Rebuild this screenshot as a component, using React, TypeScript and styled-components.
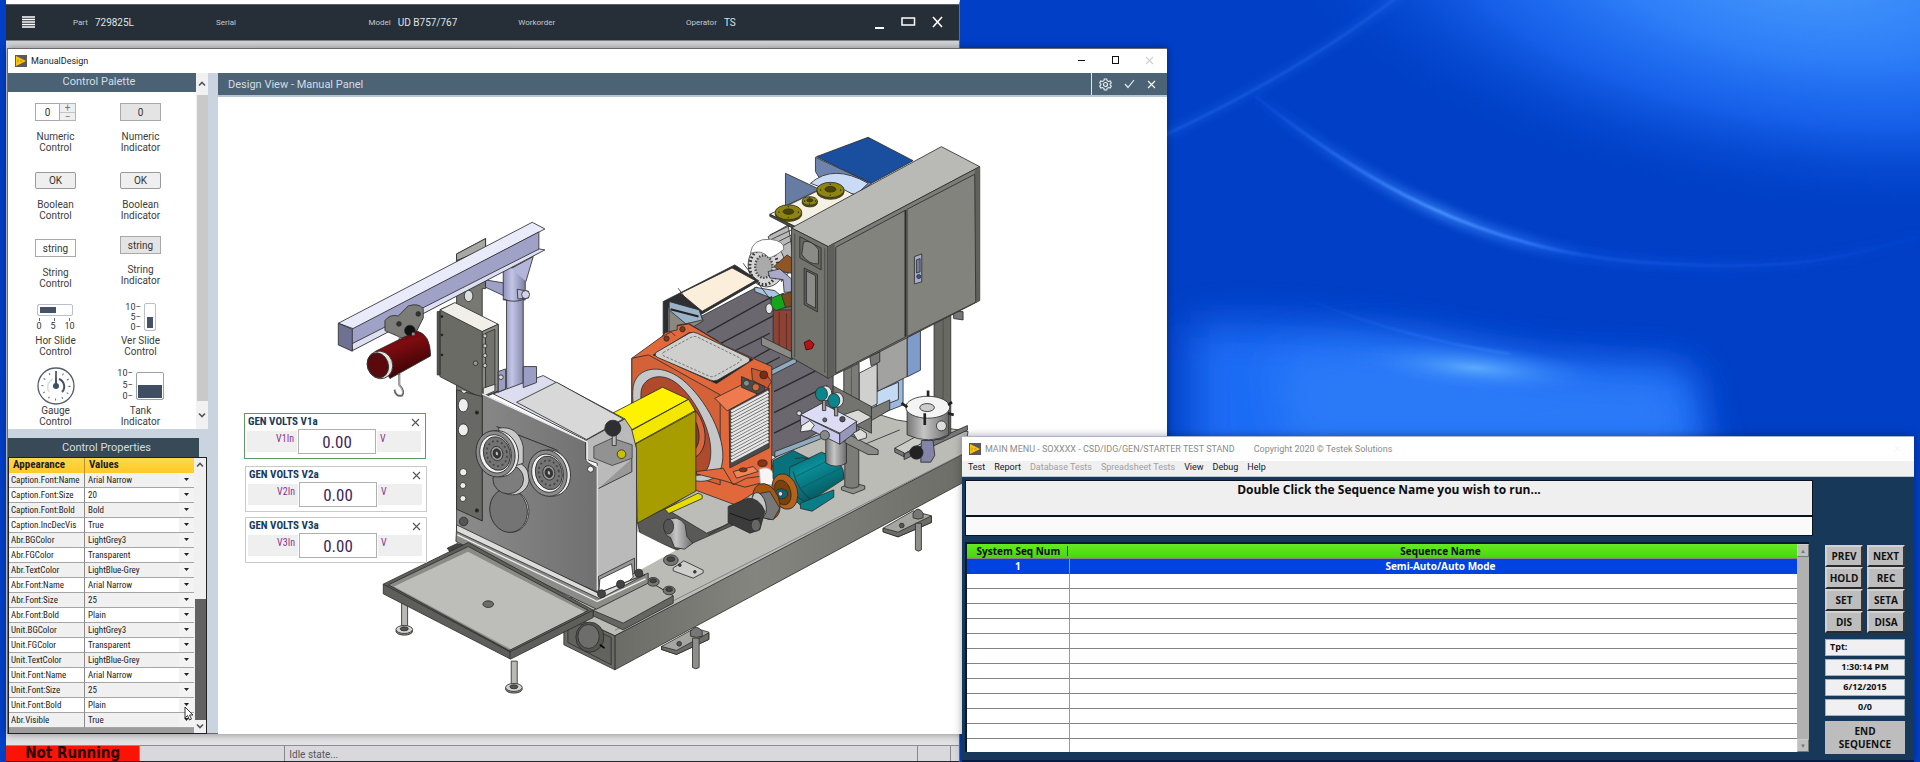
import React from 'react';
import styled, { createGlobalStyle, css } from 'styled-components';

const ui = `Roboto, "Liberation Sans", sans-serif`;
const narrow = `"Roboto Condensed", Roboto, "Liberation Sans", sans-serif`;
const segoe = `"Open Sans", "Noto Sans", sans-serif`;

const GlobalStyle = createGlobalStyle`
  * { box-sizing: border-box; }
  body { margin: 0; font-family: ${ui}; font-size: 10px; color: #333; }
  button, input, select { font: inherit; color: inherit; margin: 0; padding: 0; border-radius: 0; }
  h1, h2, p { margin: 0; font-weight: normal; }
`;

/* ---------- desktop ---------- */

const Desktop = styled.div`
  position: relative;
  min-height: 100vh;
  overflow: hidden;
  background: #003fc6;
`;

const WallpaperSvg = styled.svg`
  position: absolute;
  inset: 0;
  width: 100%;
  height: 100%;
`;

function Wallpaper() {
  return (
    <WallpaperSvg viewBox="0 0 1920 762" preserveAspectRatio="xMidYMid slice" aria-hidden="true">
      <defs>
        <radialGradient id="skyGlow">
          <stop offset="0" stopColor="#4799fb" />
          <stop offset="0.35" stopColor="#2e7ff8" />
          <stop offset="0.62" stopColor="#1c68f2" stopOpacity="0.8" />
          <stop offset="1" stopColor="#0044cc" stopOpacity="0" />
        </radialGradient>
        <radialGradient id="seaGlow">
          <stop offset="0" stopColor="#5caafd" />
          <stop offset="1" stopColor="#2a78f8" stopOpacity="0" />
        </radialGradient>
        <linearGradient id="arcLight" gradientUnits="userSpaceOnUse" x1="1255" x2="1920" y1="0" y2="0">
          <stop offset="0" stopColor="#2a70ff" stopOpacity="0.1" />
          <stop offset="0.28" stopColor="#4a94ff" />
          <stop offset="0.4" stopColor="#3a80ff" stopOpacity="0.8" />
          <stop offset="0.5" stopColor="#2a70ff" stopOpacity="0.3" />
          <stop offset="1" stopColor="#2a70ff" stopOpacity="0.05" />
        </linearGradient>
        <linearGradient id="lowArc" gradientUnits="userSpaceOnUse" x1="1290" x2="1520" y1="0" y2="0">
          <stop offset="0" stopColor="#2a70ff" stopOpacity="0" />
          <stop offset="1" stopColor="#3f86fb" stopOpacity="0.7" />
        </linearGradient>
        <filter id="soft" x="-30%" y="-60%" width="160%" height="220%"><feGaussianBlur stdDeviation="20" /></filter>
        <filter id="fine" x="-10%" y="-10%" width="120%" height="120%"><feGaussianBlur stdDeviation="0.8" /></filter>
        <filter id="halo" x="-10%" y="-10%" width="120%" height="120%"><feGaussianBlur stdDeviation="5" /></filter>
      </defs>
      <rect width="1920" height="762" fill="#003fc6" />
      <ellipse cx="1800" cy="-30" rx="560" ry="240" fill="url(#skyGlow)" transform="rotate(8 1800 -30)" />
      <path d="M1190 325 Q1330 318 1480 352 Q1600 366 1690 368 L1712 480 L1190 480 Z" fill="#1e6cf5" filter="url(#soft)" />
      <path d="M1270 360 Q1400 325 1540 372 L1685 378 L1690 450 L1290 450 Z" fill="#2f7ef9" opacity="0.8" filter="url(#soft)" />
      <ellipse cx="1475" cy="368" rx="130" ry="24" fill="url(#seaGlow)" transform="rotate(5 1475 368)" />
      <g fill="none">
        <path d="M1165 135 Q1300 72 1400 -5" stroke="#2a70f0" strokeWidth="8" opacity="0.3" filter="url(#halo)" />
        <path d="M1165 135 Q1300 72 1400 -5" stroke="#2a70f0" strokeWidth="2" opacity="0.45" filter="url(#fine)" />
        <path d="M1255 96 C1360 180 1480 250 1640 262 S1850 255 1920 236" stroke="url(#arcLight)" strokeWidth="12" opacity="0.6" filter="url(#halo)" />
        <path d="M1255 96 C1360 180 1480 250 1640 262 S1850 255 1920 236" stroke="url(#arcLight)" strokeWidth="3" filter="url(#fine)" />
        <path d="M1290 292 Q1390 336 1510 354" stroke="url(#lowArc)" strokeWidth="2" filter="url(#fine)" />
      </g>
    </WallpaperSvg>
  );
}

const IconButton = styled.button`
  display: inline-flex;
  align-items: center;
  justify-content: center;
  border: 0;
  background: none;
`;

/* ---------- test stand window behind the designer ---------- */

const StandWindow = styled.section`
  position: absolute;
  left: 6px;
  top: 0;
  bottom: 0;
  width: 49.7%;
  display: flex;
  flex-direction: column;
  border-top: 4px solid #fff;
  border-right: 1px solid #2f76dc;
  background: linear-gradient(#d3d5d8, #e2e2e4);
`;

const StandHeader = styled.header`
  display: grid;
  grid-template-columns: 67px 15% 16% 15.7% 17.6% 1fr;
  align-items: center;
  height: 37px;
  padding-bottom: 1px;
  background: #262f38;
  border-top: 1px solid #55606a;
  border-bottom: 1px solid #7b8288;
  color: #dfe3e6;
`;

const MenuButton = styled(IconButton)`
  width: 13px;
  margin-left: 16px;
`;

const Field = styled.div`
  display: flex;
  align-items: center;
  gap: 7px;
  font-size: 10px;
  white-space: nowrap;
`;

const FieldLabel = styled.span`
  font-size: 8px;
  color: #c3c9ce;
`;

const StandControls = styled.div`
  display: flex;
  justify-content: flex-end;
  align-items: center;
  gap: 16px;
  padding-right: 15px;
`;

const LastCell = styled.div`
  display: flex;
  align-items: center;
  justify-content: space-between;
`;

const StatusBar = styled.footer`
  display: flex;
  height: 17px;
  margin-top: auto;
  border-top: 1px solid #8d8f93;
  border-bottom: 1px solid #23262b;
  background: #d9d9dd;
`;

const RunState = styled.div`
  width: 14%;
  background: #fb1405;
  color: #2a0502;
  font: bold 15px/15px "DejaVu Sans Condensed", "DejaVu Sans", sans-serif;
  text-align: center;
  white-space: nowrap;
`;

const StatusCell = styled.div<{ $width?: string }>`
  ${(p) => (p.$width ? css`width: ${p.$width};` : css`flex: 1;`)}
  padding: 3px 4px 0;
  border-left: 1px solid #85878b;
  color: #55585c;
  line-height: 12px;
`;

const fields: [string, string][] = [
  ['Part', '729825L'],
  ['Serial', ''],
  ['Model', 'UD B757/767'],
  ['Workorder', ''],
];

function TestStand() {
  return (
    <StandWindow>
      <StandHeader>
        <MenuButton aria-label="Menu">
          <svg width="13" height="12" viewBox="0 0 13 12" stroke="#fff" strokeWidth="1.4">
            <path d="M0 1h13M0 3.5h13M0 6h13M0 8.500h13M0 11h13" />
          </svg>
        </MenuButton>
        {fields.map(([label, value]) => (
          <Field key={label}><FieldLabel>{label}</FieldLabel>{value}</Field>
        ))}
        <LastCell>
          <Field><FieldLabel>Operator</FieldLabel>TS</Field>
          <StandControls>
            <IconButton aria-label="Minimize">
              <svg width="10" height="14" viewBox="0 0 10 14"><path d="M0 13h9" stroke="#fff" strokeWidth="2" /></svg>
            </IconButton>
            <IconButton aria-label="Maximize">
              <svg width="15" height="12" viewBox="0 0 15 12"><rect x="1" y="2" width="12.500" height="7" fill="none" stroke="#fff" strokeWidth="1.5" /></svg>
            </IconButton>
            <IconButton aria-label="Close">
              <svg width="12" height="12" viewBox="0 0 12 12"><path d="M1 1l9 10M10 1L1 11" stroke="#fff" strokeWidth="1.6" /></svg>
            </IconButton>
          </StandControls>
        </LastCell>
      </StandHeader>
      <StatusBar>
        <RunState>Not Running</RunState>
        <StatusCell $width="15.2%" />
        <StatusCell>Idle state...</StatusCell>
        <StatusCell $width="33px" />
        <StatusCell $width="6px" />
      </StatusBar>
    </StandWindow>
  );
}

/* ---------- shared window parts ---------- */

const TitleBar = styled.header<{ $muted?: boolean }>`
  display: flex;
  align-items: center;
  flex: none;
  height: 24px;
  padding: 0 7px 1px;
  background: #fff;
  color: ${(p) => (p.$muted ? '#8b8b8b' : '#222')};
  font-size: 9px;
  white-space: pre;
`;

const Title = styled.h1`
  margin-left: 4px;
  font-size: 9px;
`;

const Logo = () => (
  <svg width="12" height="12" viewBox="0 0 12 12" aria-hidden="true">
    <rect width="12" height="12" fill="#5b5a58" />
    <path d="M1 1l10 5-10 5z" fill="#ffc60a" />
    <path d="M3 4.500v3M5 6h2.500" stroke="#b98a00" />
  </svg>
);

const Chevron = ({ up }: { up?: boolean }) => (
  <svg width="8" height="6" viewBox="0 0 8 6" aria-hidden="true">
    <path d={up ? 'M1 4.500l3-3 3 3' : 'M1 1.500l3 3 3-3'} fill="none" stroke="#555" strokeWidth="1.6" />
  </svg>
);

/* ---------- designer window ---------- */

const DesignWindow = styled.section`
  position: absolute;
  left: 7px;
  top: 48px;
  bottom: 28px;
  width: 60.4%;
  display: flex;
  flex-direction: column;
  border: 1px solid #6a6a6e;
  border-right: 0;
  background: #fff;
  box-shadow: 0 0 8px rgba(0, 0, 0, 0.4);
`;

const WindowControls = styled.div`
  display: flex;
  align-items: center;
  gap: 25px;
  margin-left: auto;
  padding-right: 6px;
`;

const DesignBody = styled.div`
  display: grid;
  grid-template-columns: 200px minmax(0, 1fr);
  column-gap: 10px;
  flex: 1;
  min-height: 0;
  background: #cad3e0;
`;

const Sidebar = styled.aside`
  display: flex;
  flex-direction: column;
  gap: 9px;
  min-height: 0;
`;

const PalettePane = styled.section`
  display: flex;
  flex: 1;
  min-height: 0;
  overflow: hidden;
  background: #fff;
`;

const PaneMain = styled.div`
  flex: 1;
  min-width: 0;
`;

const PaneTitle = styled.h2<{ $dark?: boolean }>`
  height: 19px;
  background: ${(p) => (p.$dark ? '#384a57' : '#4a6274')};
  color: #d5dde3;
  font-size: 11px;
  line-height: ${(p) => (p.$dark ? '19px' : '17px')};
  text-align: center;
  ${(p) => (p.$dark ? css`margin-right: 9px; padding-left: 6px;` : css`padding-right: 6px;`)}
`;

const ScrollTrack = styled.div`
  display: flex;
  flex-direction: column;
  align-items: center;
  width: 12px;
  background: #f1f1f1;
`;

const ScrollEnd = styled(IconButton)<{ $h: number }>`
  width: 100%;
  height: ${(p) => p.$h}px;
`;

const ScrollThumb = styled.div<{ $dark?: boolean }>`
  width: 11px;
  flex: 1;
  background: ${(p) => (p.$dark ? '#626262' : '#c9c9c9')};
`;

const PaletteGrid = styled.div`
  display: grid;
  grid-template-columns: 85px 85px;
  grid-template-rows: 69px 64px 67px 64px auto;
  padding: 11px 0 0 5px;
`;

const PaletteItem = styled.div<{ $lead?: number }>`
  display: flex;
  flex-direction: column;
  align-items: center;
  padding-top: ${(p) => p.$lead ?? 0}px;
`;

const Preview = styled.div<{ $h: number }>`
  display: flex;
  align-items: flex-start;
  justify-content: center;
  height: ${(p) => p.$h}px;
`;

const Caption = styled.span`
  width: 52px;
  font-size: 10px;
  line-height: 11px;
  text-align: center;
  color: #3c3c3c;
`;

const SampleInput = styled.input<{ $readonly?: boolean; $w: number }>`
  width: ${(p) => p.$w}px;
  height: 18px;
  border: 1px solid #a9a9a9;
  background: ${(p) => (p.$readonly ? '#e4e4e4' : '#fff')};
  text-align: center;
`;

const Spinner = styled.div`
  display: grid;
  width: 16px;
  height: 18px;
  border: 1px solid #b5b5b5;
  border-left: 0;
  background: #efefef;
`;

const Step = styled.button`
  height: 8px;
  border: 0;
  background: none;
  color: #777;
  font-size: 10px;
  line-height: 8px;
  & + & { border-top: 1px solid #c4c4c4; }
`;

const OkButton = styled.button`
  width: 41px;
  height: 17px;
  border: 1px solid #9a9a9a;
  border-radius: 2px;
  background: #efefef;
  font-size: 10px;
`;

const HorScale = styled.div`
  display: flex;
  flex-direction: column;
  width: 38px;
  padding-top: 1px;
`;

const Range = styled.input<{ $vertical?: boolean }>`
  appearance: none;
  border: 1px solid #b9bfcb;
  border-radius: 2px;
  background: #fff;
  ${(p) =>
    p.$vertical
      ? css`
          writing-mode: vertical-lr;
          width: 12px;
          height: 28px;
          box-shadow: inset 0 0 0 2px #fff;
          background: linear-gradient(#fff 50%, #465266 50%);
        `
      : css`
          width: 36px;
          height: 12px;
          box-shadow: inset 0 0 0 2px #fff;
          background: linear-gradient(90deg, #465266 52%, #fff 52%);
        `}
  &::-webkit-slider-thumb { appearance: none; width: 0; height: 0; }
`;

const Ticks = styled.div<{ $vertical?: boolean }>`
  display: flex;
  justify-content: space-between;
  font-size: 9px;
  line-height: 9px;
  ${(p) =>
    p.$vertical
      ? css`flex-direction: column; height: 29px; text-align: right; margin-right: 3px; white-space: nowrap;`
      : css`height: 15px; align-items: flex-end; background:
          linear-gradient(#666, #666) 2px 2px / 1px 3px no-repeat,
          linear-gradient(#666, #666) 17px 2px / 1px 3px no-repeat,
          linear-gradient(#666, #666) 32px 2px / 1px 3px no-repeat;`}
`;

const Tank = styled.div`
  width: 28px;
  height: 28px;
  margin-top: 5px;
  border: 1px solid #9aa1ae;
  border-radius: 2px;
  box-shadow: inset 0 0 0 1px #fff;
  background: linear-gradient(#fff 48%, #3f4e62 48%);
`;

const TankTicks = styled(Ticks)`
  margin-top: 2px;
  height: 32px;
`;

const Gauge = () => (
  <svg width="38" height="38" viewBox="0 0 38 38" aria-hidden="true">
    <circle cx="19" cy="19" r="18" fill="#fff" stroke="#555d6a" strokeWidth="1.3" />
    <circle cx="19" cy="19" r="13.500" fill="none" stroke="#666" strokeWidth="2" strokeDasharray="1 6" />
    <path d="M12 25a9 9 0 0 1 4-13" fill="none" stroke="#dcdfe5" strokeWidth="1.5" />
    <path d="M22 12a8 8 0 0 1 3 13" fill="none" stroke="#465266" strokeWidth="2" />
    <path d="M18.300 19L19 4l.7 15z" stroke="#465266" />
    <circle cx="19" cy="19" r="3" fill="#3f4e62" />
  </svg>
);

function Palette() {
  return (
    <PalettePane>
      <PaneMain>
        <PaneTitle>Control Palette</PaneTitle>
        <PaletteGrid>
          <PaletteItem>
            <Preview $h={28}>
              <SampleInput $w={25} aria-label="Numeric control" defaultValue="0" />
              <Spinner>
                <Step aria-label="Increase">+</Step>
                <Step aria-label="Decrease">−</Step>
              </Spinner>
            </Preview>
            <Caption>Numeric Control</Caption>
          </PaletteItem>
          <PaletteItem>
            <Preview $h={28}><SampleInput $w={41} $readonly readOnly aria-label="Numeric indicator" value="0" /></Preview>
            <Caption>Numeric Indicator</Caption>
          </PaletteItem>
          <PaletteItem>
            <Preview $h={27}><OkButton>OK</OkButton></Preview>
            <Caption>Boolean Control</Caption>
          </PaletteItem>
          <PaletteItem>
            <Preview $h={27}><OkButton>OK</OkButton></Preview>
            <Caption>Boolean Indicator</Caption>
          </PaletteItem>
          <PaletteItem $lead={3}>
            <Preview $h={28}><SampleInput $w={41} aria-label="String control" defaultValue="string" /></Preview>
            <Caption>String Control</Caption>
          </PaletteItem>
          <PaletteItem>
            <Preview $h={28}><SampleInput $w={41} $readonly readOnly aria-label="String indicator" value="string" /></Preview>
            <Caption>String Indicator</Caption>
          </PaletteItem>
          <PaletteItem>
            <Preview $h={32}>
              <HorScale>
                <Range type="range" aria-label="Horizontal slide" defaultValue={50} />
                <Ticks><span>0</span><span>5</span><span>10</span></Ticks>
              </HorScale>
            </Preview>
            <Caption>Hor Slide Control</Caption>
          </PaletteItem>
          <PaletteItem>
            <Preview $h={32}>
              <Ticks $vertical><span>10−</span><span>5−</span><span>0−</span></Ticks>
              <Range $vertical type="range" aria-label="Vertical slide" defaultValue={50} />
            </Preview>
            <Caption>Ver Slide Control</Caption>
          </PaletteItem>
          <PaletteItem>
            <Preview $h={38}><Gauge /></Preview>
            <Caption>Gauge Control</Caption>
          </PaletteItem>
          <PaletteItem>
            <Preview $h={38}>
              <TankTicks $vertical><span>10−</span><span>5−</span><span>0−</span></TankTicks>
              <Tank />
            </Preview>
            <Caption>Tank Indicator</Caption>
          </PaletteItem>
        </PaletteGrid>
      </PaneMain>
      <ScrollTrack>
        <ScrollEnd $h={22} aria-label="Scroll up"><Chevron up /></ScrollEnd>
        <ScrollThumb />
        <ScrollEnd $h={28} aria-label="Scroll down"><Chevron /></ScrollEnd>
      </ScrollTrack>
    </PalettePane>
  );
}

const PropsFrame = styled.div`
  display: flex;
  margin-right: 1px;
  border: 1px solid #222;
  background: #9d9d9d;
`;

const PropsTable = styled.table`
  flex: 1;
  margin-bottom: 5px;
  border-spacing: 0;
  table-layout: fixed;
  width: 185px;
  font: 9px/14px ${narrow};
  color: #222;

  th {
    height: 15px;
    padding: 0 4px;
    background: linear-gradient(#ffd84a, #ffc928);
    font-size: 11px;
    font-weight: bold;
    text-align: left;
  }
  th:first-child { width: 76px; border-right: 1px solid #b8922a; }
  td {
    height: 15px;
    padding: 0;
    border-bottom: 1px solid #a5a5a5;
    background: #fff;
  }
  td:first-child { padding-left: 2px; border-right: 1px solid #8a8a8a; }
  tr:nth-child(odd) td { background: #f0f0f0; }
`;

const SelectCell = styled.div`
  display: flex;
  align-items: center;
  height: 14px;

  svg { flex: none; margin: 0 5px 0 -10px; pointer-events: none; }
`;

const ValueSelect = styled.select`
  appearance: none;
  flex: 1;
  min-width: 0;
  height: 14px;
  padding: 0 3px;
  border: 0;
  background: linear-gradient(90deg, transparent 94px, #f3f3f3 94px);
`;

const DarkScroll = styled(ScrollTrack)`
  width: 12px;
  background: #f0f0f0;
`;

const ScrollGap = styled.div`
  height: 127px;
`;

const properties: [string, string][] = [
  ['Caption.Font:Name', 'Arial Narrow'],
  ['Caption.Font:Size', '20'],
  ['Caption.Font:Bold', 'Bold'],
  ['Caption.IncDecVis', 'True'],
  ['Abr.BGColor', 'LightGrey3'],
  ['Abr.FGColor', 'Transparent'],
  ['Abr.TextColor', 'LightBlue-Grey'],
  ['Abr.Font:Name', 'Arial Narrow'],
  ['Abr.Font:Size', '25'],
  ['Abr.Font:Bold', 'Plain'],
  ['Unit.BGColor', 'LightGrey3'],
  ['Unit.FGColor', 'Transparent'],
  ['Unit.TextColor', 'LightBlue-Grey'],
  ['Unit.Font:Name', 'Arial Narrow'],
  ['Unit.Font:Size', '25'],
  ['Unit.Font:Bold', 'Plain'],
  ['Abr.Visible', 'True'],
];

function Properties() {
  return (
    <section>
      <PaneTitle $dark>Control Properties</PaneTitle>
      <PropsFrame>
        <PropsTable>
          <thead><tr><th>Appearance</th><th>Values</th></tr></thead>
          <tbody>
            {properties.map(([name, value]) => (
              <tr key={name}>
                <td>{name}</td>
                <td>
                  <SelectCell>
                    <ValueSelect aria-label={name} defaultValue={value}><option>{value}</option></ValueSelect>
                    <svg width="5" height="3" viewBox="0 0 5 3" aria-hidden="true"><path d="M0 0h5L2.500 3z" fill="#222" /></svg>
                  </SelectCell>
                </td>
              </tr>
            ))}
          </tbody>
        </PropsTable>
        <DarkScroll>
          <ScrollEnd $h={14} aria-label="Scroll up"><Chevron up /></ScrollEnd>
          <ScrollGap />
          <ScrollThumb $dark />
          <ScrollEnd $h={13} aria-label="Scroll down"><Chevron /></ScrollEnd>
        </DarkScroll>
      </PropsFrame>
    </section>
  );
}

const DesignView = styled.main`
  display: flex;
  flex-direction: column;
  min-width: 0;
  background: #fff;
`;

const ViewBar = styled.div`
  display: flex;
  align-items: center;
  justify-content: space-between;
  flex: none;
  height: 24px;
  padding-left: 10px;
  border-bottom: 2px solid #b4c6d6;
  background: #4b6375;
  color: #d5dde3;
  font-size: 11px;
`;

const ViewTools = styled.div`
  display: flex;
  align-items: center;
  justify-content: space-around;
  align-self: stretch;
  width: 76px;
  padding: 0 4px 0 1px;
  border-left: 1px solid #dfe6ec;
`;

const Canvas = styled.div`
  position: relative;
  flex: 1;
  min-height: 0;
  overflow: hidden;
`;

const MachineSvg = styled.svg`
  display: block;
  width: 100%;
`;

const GaugeCard = styled.section<{ $x: number; $y: number; $selected?: boolean }>`
  position: absolute;
  left: ${(p) => p.$x}px;
  top: ${(p) => p.$y}px;
  width: 182px;
  padding: 1px 4px 4px 2px;
  border: 1px solid ${(p) => (p.$selected ? '#5d9c66' : '#c9c9c9')};
  background: #fff;
`;

const CardHead = styled.div`
  display: flex;
  align-items: center;
  justify-content: space-between;
  height: 14px;
  padding: 0 1px;
  color: #153a5e;
  font: bold 11px/14px ${narrow};
`;

const CardBody = styled.div`
  display: grid;
  grid-template-columns: 50px 78px 1fr;
  column-gap: 1px;
  align-items: center;
  color: #8c2f8f;
  font: 10px/13px ${narrow};
`;

const Tag = styled.span<{ $right?: boolean }>`
  height: 21px;
  padding: 1px 3px;
  background: #efefef;
  text-align: ${(p) => (p.$right ? 'right' : 'left')};
`;

const Reading = styled.input`
  width: 78px;
  height: 25px;
  border: 1px solid #b0b0b0;
  background: #fff;
  color: #40265c;
  font: 17px ${narrow};
  text-align: center;
`;

const meters = [
  { n: 1, x: 26, y: 316, selected: true },
  { n: 2, x: 27, y: 369 },
  { n: 3, x: 27, y: 420 },
];

const line = '#2d2d2d';

function Stand({ x, y }: { x: number; y: number }) {
  return (
    <g>
      <path d={`M${x - 8} ${y}v-80h18v80z`} fill="#b9b9b6" />
      <ellipse cx={x} cy={y + 4} rx="25" ry="12" fill="#8f8f8c" />
      <ellipse cx={x} cy={y - 1} rx="25" ry="12" fill="#d3d3d0" />
      <ellipse cx={x} cy={y - 3} rx="12" ry="6" fill="#55554f" />
    </g>
  );
}

function Flange({ x, y, r }: { x: number; y: number; r: number }) {
  return (
    <g>
      <ellipse cx={x} cy={y + 5} rx={r} ry={r * 0.56} fill="#5c5504" />
      <ellipse cx={x} cy={y} rx={r} ry={r * 0.56} fill="#8e8410" />
      <ellipse cx={x} cy={y - 2} rx={r * 0.4} ry={r * 0.2} fill="#4a4504" />
      <path d={`M${x - r * 0.75} ${y}h3M${x + r * 0.7} ${y}h3M${x - 2} ${y + r * 0.4}h3M${x - 2} ${y - r * 0.42}h3`} stroke="#2b2800" strokeWidth="4" />
    </g>
  );
}

function Wheel({ x, y }: { x: number; y: number }) {
  return (
    <g transform={`rotate(-14 ${x} ${y})`}>
      <ellipse cx={x + 10} cy={y + 2} rx="58" ry="70" fill="#e9e9e9" />
      <ellipse cx={x} cy={y} rx="58" ry="70" fill="#8b8b8b" />
      <ellipse cx={x} cy={y} rx="47" ry="58" fill="#f2f2f2" />
      <ellipse cx={x + 4} cy={y} rx="40" ry="51" fill="#747474" />
      <ellipse cx={x + 4} cy={y} rx="30" ry="38" fill="none" stroke="#444" strokeWidth="5" strokeDasharray="6 8" />
      <ellipse cx={x + 4} cy={y} rx="18" ry="22" fill="#999" />
      <ellipse cx={x + 4} cy={y} rx="11" ry="14" fill="#333" />
      <ellipse cx={x + 4} cy={y} rx="5" ry="7" fill="#bbb" />
    </g>
  );
}

function Machine() {
  return (
    <MachineSvg viewBox="218 97 949 637" role="img" aria-label="Generator test stand model">
      <defs>
        <linearGradient id="pipe"><stop offset="0" stopColor="#8e90b8" /><stop offset="0.4" stopColor="#c3c5e6" /><stop offset="1" stopColor="#7e80a6" /></linearGradient>
        <linearGradient id="gear" x1="0" x2="1"><stop offset="0" stopColor="#8c8c8c" /><stop offset="1" stopColor="#707070" /></linearGradient>
        <linearGradient id="can"><stop offset="0" stopColor="#777" /><stop offset="0.4" stopColor="#c6c6c6" /><stop offset="1" stopColor="#6a6a6a" /></linearGradient>
        <linearGradient id="red" x1="0" y1="0" x2="0.4" y2="1"><stop offset="0" stopColor="#4e0508" /><stop offset="0.4" stopColor="#7e0c10" /><stop offset="1" stopColor="#3a0305" /></linearGradient>
        <linearGradient id="teal" x1="0" y1="0" x2="0.5" y2="1"><stop offset="0" stopColor="#04666f" /><stop offset="0.4" stopColor="#0b8e98" /><stop offset="1" stopColor="#03535b" /></linearGradient>
        <linearGradient id="skid" x1="0" x2="1"><stop offset="0" stopColor="#6c6c67" /><stop offset="0.4" stopColor="#85857f" /><stop offset="1" stopColor="#6d6d68" /></linearGradient>
      </defs>

      {/* skid base */}
      <g transform="translate(560 380) scale(.33333)" stroke={line} strokeWidth="2.500" strokeLinejoin="round">
        <path d="M970 445l90-52 55 15v20l-100 43-45-15z" fill="#a6a6a1" /><path d="M970 445l45 12 100-49v20l-100 43-45-15z" fill="#6d6d68" />
        <path d="M1067 430h18v80q-9 8-18 0z" fill="#8e8e8b" /><path d="M1060 400q15-25 30 0v14q-15 8-30 0z" fill="#777" />
        <path d="M305 800l100-55 42 12v22l-97 45-45-15z" fill="#a6a6a1" /><path d="M305 800l45 12 97-53v20l-97 45-45-15z" fill="#6d6d68" />
        <path d="M398 775h20v88q-10 8-20 0z" fill="#8e8e8b" /><path d="M392 755q17-25 35 0v14q-17 8-35 0z" fill="#777" />
        <circle cx="358" cy="792" r="7" fill="#555" /><circle cx="1026" cy="437" r="7" fill="#555" />
        <path d="M240 400L560 290l320-210 130 40 215 35-15 85L165 768-20 680l180-90z" fill="#bbbcb6" />
        <path d="M165 768L1225 215v85L165 870z" fill="url(#skid)" />
        <path d="M12 700l153 68v102L12 795z" fill="#6a6a65" /><path d="M24 715l130 58v82L24 788z" fill="#62625e" />
        <ellipse cx="90" cy="772" rx="42" ry="45" fill="#55554f" /><ellipse cx="86" cy="770" rx="32" ry="36" fill="#6d6d6b" />
        <path d="M120 795l14 10" stroke="#000" strokeWidth="5" />
        <path d="M165 752L1210 222" fill="none" stroke="#777" />
        <path d="M232 425l120-55 170 65-170 75-110-45z" fill="#595957" />
        <path d="M320 388l110-75 130 50-20 55-100 42z" fill="#bcbdb8" />
        <path d="M445 465l400-230M850 220l170-70" fill="none" />
        <path d="M232 455l115 57-105 58-10 10z" fill="#fff" stroke="none" />
        <path d="M100 692l160-92 80 48v22l-150 80-90-42z" fill="#666661" /><path d="M100 692l160-92 80 48-150 82z" fill="#b4b5af" />
        <path d="M340 565l32-22 58 28v8l-30 16-60-22z" fill="#cfcfcb" />
        <circle cx="360" cy="556" r="4" fill="#444" /><circle cx="405" cy="576" r="4" fill="#444" />
        <ellipse cx="333" cy="541" rx="22" ry="16" fill="#777" /><ellipse cx="333" cy="538" rx="12" ry="7" fill="#444" />
        <ellipse cx="280" cy="606" rx="18" ry="13" fill="#777" /><ellipse cx="280" cy="603" rx="10" ry="6" fill="#444" />
        <ellipse cx="328" cy="632" rx="18" ry="13" fill="#777" /><ellipse cx="328" cy="629" rx="10" ry="6" fill="#444" />
        <path d="M1005 205l95-52 28 10-95 60z" fill="#cbccc7" /><path d="M1005 205l28 14v12l-28-14zM1033 222l190-85v14l-190 88z" fill="#777" />
      </g>

      {/* rear assemblies and cabinet */}
      <g transform="translate(620 120) scale(.33333)" stroke={line} strokeWidth="2.500" strokeLinejoin="round">
        <path d="M943 590l50-25v375q-25 25-50 18z" fill="#686963" /><path d="M970 578v380" stroke="#4a4a48" />
        <path d="M1000 575h30v25l-28-4z" fill="#777" />
        <path d="M587 112l168 78-40 35-90-10-38-60z" fill="#6c84ae" />
        <path d="M590 110L745 52l135 70-125 68z" fill="#1a4e9f" />
        <path d="M572 190Q640 130 745 190l-35 34-100-20z" fill="#c9dbf6" />
        <path d="M497 160l102 48-60 30-42 20z" fill="#667ca2" />
        <path d="M862 650l40-22v123l-40 20z" fill="#7f9bcb" />
        <path d="M752 810l98-40v85l-95 38z" fill="#9db8dd" /><path d="M770 815l66-28v52l-66 26z" fill="#c4d9f3" />
        <path d="M770 695l92-47v122l-88 44z" fill="#a2a2a0" />
        <path d="M718 760l54-28v120l-54 28z" fill="#d0d0ce" />
        <path d="M745 870l65-30v30l-55 32z" fill="#7b7b77" />
        {/* cowled fan */}
        <path d="M445 350l60-35 20 120-40 50z" fill="#b9b9b9" />
        <path d="M450 345l60-28M455 358l60-28M462 372l55-28M470 388l50-28" stroke="#333" />
        <ellipse cx="440" cy="435" rx="55" ry="66" fill="#d5d5d5" />
        <ellipse cx="432" cy="440" rx="42" ry="54" fill="none" stroke="#333" strokeWidth="9" strokeDasharray="5 6" />
        <ellipse cx="432" cy="440" rx="26" ry="34" fill="#aaa" stroke="#444" strokeWidth="7" strokeDasharray="4 5" />
        <path d="M392 400q5-45 60-42 42 5 40 30-30 25-45 25-20-25-55-13z" fill="#fff" stroke="#666" />
        <path d="M462 440l40-35 15 10v45l-35-5z" fill="#8e5627" />
        <path d="M445 455l35-8 35 30v40h-22l-3-38-40-5z" fill="#a9a9c9" />
        {/* drive motor housing */}
        <path d="M205 610l205-108 230 130v280L465 1010 250 900z" fill="#6a686e" />
        <path d="M405 502l60 10 55 48-115-45z" fill="#a9c3e3" />
        <path d="M262 638l195-108M300 672l190-100M330 700l120-60M375 730l140-80M400 752l80-40M463 815l150-75M463 878l160-80M463 940l160-80" fill="none" stroke="#2a292c" strokeWidth="4" />
        <path d="M455 750l75-38v16l-75 38zM465 995l170-65v14l-170 68z" fill="#8fabc0" />
        <path d="M130 545l215-110 72 48-172 100-100-22v78l-15 5z" fill="#2d2f33" />
        <path d="M148 548l92 30 10 25-50 30-52 10z" fill="#8a887f" />
        <path d="M148 545l90 25 10 30-50 12-50-42z" fill="#9ab3c8" /><path d="M152 568l84 22" stroke="#222" strokeWidth="6" />
        <path d="M182 520l155-76 70 38-160 92z" fill="#fbefdb" />
        <path d="M175 505l35 48M370 430l90 120" fill="none" />
        {/* hydraulic filter */}
        <path d="M460 570h60v120l-30 10-30-20z" fill="#8b4335" /><path d="M478 575v110M500 580v110" stroke="#5a251c" />
        <path d="M425 650l90 45v22l-90-42z" fill="#8a8b87" />
        <path d="M455 535l35-15 12 10-4 32-30 10-15-15z" fill="#15a51c" /><path d="M485 525l30-10v45l-18 2z" fill="#7a4a20" />
        <ellipse cx="448" cy="566" rx="10" ry="15" fill="#e6e6e6" />
        {/* valve plate */}
        <path d="M450 283l188-92 77 40-178 94z" fill="#f5f1e4" /><path d="M450 283l87 42-2 8-85-44z" fill="#4a4a45" />
        <Flange x={632} y={210} r={41} /><Flange x={570} y={243} r={23} /><Flange x={506} y={277} r={40} />
        {/* cabinet */}
        <path d="M515 324L965 80l115 60-455 240z" fill="#b9bab5" />
        <path d="M515 324l110 56v395l-110-62z" fill="#74746f" />
        <path d="M625 380l455-240v402L625 775z" fill="#7d7d78" />
        <path d="M625 380l20-8v392l-20 11zM1065 150l15-10v402l-12 6z" fill="#5f5f5b" stroke="none" />
        <path d="M648 382l209-111v380L648 760zM862 268l203-105 3 384-206 103z" fill="#83837e" />
        <path d="M857 270v380" stroke="#2a2a2a" strokeWidth="5" />
        <path d="M884 410l22-8v84l-22 6z" fill="#a6abc8" /><path d="M890 420l11-4v40l-11 3z" fill="#767b99" /><circle cx="897" cy="470" r="6" fill="#2b5a94" />
        <path d="M525 340v372M615 385v374" stroke="#444" />
        <path d="M540 350l64 34v66l-64-36z" fill="#666661" /><path d="M551 366q22-8 45 22v44q-30 2-50-28z" fill="#8a8a87" />
        <path d="M553 444l40 20v112l-40-22z" fill="#5f5f5b" /><path d="M560 453l27 14v98l-27-15z" fill="#8b8b87" />
        <path d="M553 668l16-8 14 12-6 14-18 4z" fill="#b3141a" stroke="#4a0003" />
        <path d="M750 710l30-14v30l-26 12z" fill="#777" />
        <path d="M672 752l46-22v260q-20 14-46 0z" fill="#7b7c77" /><path d="M695 742v250" stroke="#555" />
        {/* strainer pot */}
        <path d="M862 860h125v85q-60 30-125 0z" fill="url(#can)" />
        <ellipse cx="924" cy="862" rx="66" ry="33" fill="#f4f4f4" /><ellipse cx="922" cy="863" rx="22" ry="12" fill="#ccc" />
        <path d="M845 850l18 12M1002 885l-18-5M925 812v18M915 880v35M985 855l12-8" stroke="#222" strokeWidth="8" />
        <circle cx="965" cy="918" r="15" fill="#ddd" />
        <path d="M905 962h35l5 45-12 20h-30z" fill="#8484a8" /><circle cx="890" cy="998" r="20" fill="#222" />
      </g>

      {/* generator, guard and pumps */}
      <g transform="translate(620 120) scale(.33333)" stroke={line} strokeWidth="2.500" strokeLinejoin="round">
        <path d="M36 715l90-65 10-12 36-8v-14l34-6 110 68 140 62v345l-110 70L36 1040z" fill="#e0683b" />
        <path d="M36 715l50-10 215 120v270L36 1010z" fill="#d46238" />
        <path d="M172 618l34-6 90 52M126 650l28-14 12 12" fill="none" />
        <circle cx="188" cy="628" r="8" fill="#8c3315" /><circle cx="140" cy="656" r="8" fill="#8c3315" />
        <path d="M100 705l110-68 190 82-110 72z" fill="#222" />
        <path d="M108 698l100-58q12-6 24 0l152 72q12 8 0 16l-90 52q-12 6-24 0L112 712q-10-6-4-14z" fill="#cfcfce" />
        <path d="M130 698l84-46q10-5 20 0l126 62q8 6 0 12l-74 42q-10 5-20 0L132 708q-8-4-2-10z" fill="none" stroke="#666" strokeDasharray="8 5" />
        <path d="M40 800C50 740 130 725 200 790S325 970 305 1040 190 1090 130 1030 30 880 40 800z" fill="#c6c7c9" />
        <path d="M64 812C72 770 130 750 182 800S286 950 270 1025 190 1060 140 1010 57 880 64 812z" fill="#b04a2c" />
        <ellipse cx="190" cy="930" rx="62" ry="90" fill="#d9663e" transform="rotate(-20 190 930)" /><ellipse cx="190" cy="930" rx="44" ry="70" fill="#8f3a22" transform="rotate(-20 190 930)" />
        <path d="M395 745l40 12 20 28-12 20-45-24z" fill="#c85a33" /><circle cx="432" cy="765" r="12" fill="#7c2a10" />
        <path d="M285 835l100-50 25 14v30l-88 44z" fill="#ef7a4d" />
        <path d="M365 770l70 30v32l-70-30z" fill="#4b4b49" /><circle cx="380" cy="790" r="9" fill="#8a8a88" /><circle cx="408" cy="802" r="11" fill="#d9663e" />
        <path d="M328 870l120-66v180L330 1044z" fill="#4a4a4a" />
        {Array.from({ length: 16 }, (_, i) => (
          <path key={i} d={`M334 ${875 + i * 10}l112-60`} stroke="#e6e6e6" strokeWidth="7" />
        ))}
      </g>
      <g transform="translate(560 380) scale(.33333)" stroke={line} strokeWidth="2.500" strokeLinejoin="round">
        <path d="M410 275l80-10 30 50 40-20 75-10v-45l5 30v30l-85 22-65-20-80-20z" fill="#e0683b" />
        <path d="M520 275l60-15 15 15-65 20z" fill="#f18355" /><ellipse cx="550" cy="270" rx="12" ry="6" fill="#8c3315" /><ellipse cx="608" cy="250" rx="14" ry="10" fill="#8c3315" />
        {/* yellow coupling guard */}
        <path d="M315 388l100-48 12 6v10l-100 45z" fill="#e8dd00" />
        <path d="M158 100L308 22l78 36 20 40-178 100-70-90z" fill="#fff200" />
        <path d="M215 152L386 58l20 34-190 105z" fill="#f3e600" />
        <path d="M228 192l180-98v240L232 430z" fill="#a89d00" />
        <path d="M215 150l171-92" />
        {/* exhaust elbow */}
        <path d="M318 425q35-25 58 10l5 35 18 20-25 18-30-5-12-30q-25-5-14-48z" fill="url(#can)" /><ellipse cx="326" cy="440" rx="15" ry="22" fill="#555" />
        {/* teal motor */}
        <path d="M598 268q30-12 42 12v35h-38z" fill="#f5f5f5" stroke="#aaa" />
        <path d="M640 242l60-30 50 25 80 10v50L720 375l-80-80z" fill="#08727c" />
        <path d="M690 262l95-45q70 20 68 80l-110 72q-60-20-53-107z" fill="url(#teal)" />
        <path d="M708 290l120-60M722 325l125-62" stroke="#045861" strokeWidth="2" />
        <path d="M700 275q15 60 55 85M750 238q-20-8-45-2" fill="none" />
        <path d="M722 370l100-40v22l-65 42-35-8z" fill="#0a7e88" />
        <ellipse cx="675" cy="335" rx="38" ry="54" fill="#b5621a" transform="rotate(-15 675 335)" />
        <ellipse cx="668" cy="338" rx="25" ry="38" fill="#7a4208" transform="rotate(-15 668 338)" /><ellipse cx="664" cy="342" rx="20" ry="15" fill="#0d6470" /><circle cx="662" cy="342" r="7" fill="#cde" />
        <ellipse cx="620" cy="365" rx="38" ry="56" fill="#a5560f" transform="rotate(-22 620 365)" />
        <path d="M580 345l50-10 30 50-20 35-50-10z" fill="#777" />
        <ellipse cx="598" cy="375" rx="20" ry="38" fill="#c5c5c5" transform="rotate(-15 598 375)" />
        <path d="M505 380l60-25q35 0 50 40l-15 55-30 10-65-32z" fill="#3b3b3b" /><ellipse cx="588" cy="436" rx="14" ry="18" fill="#666" /><path d="M510 400l60 22 30-8" fill="none" stroke="#111" />
        {/* filter stand and manifold */}
        <path d="M845 322l30-14 40 10v10l-35 14-35-12z" fill="#8f908b" /><path d="M855 180h42v140q-20 10-42 0z" fill="#7b7c77" />
        <path d="M798 160h62v90q-30 18-62 0z" fill="url(#can)" />
        <path d="M820 18l115 62v80l-115-60z" fill="#73746f" /><path d="M835 110l60-20 40 22-45 24z" fill="#d9d9d6" />
        <path d="M860 160l95 50v14h-30l-70-36z" fill="#8a8b86" />
        <path d="M722 105l65-35 105 55-40 40z" fill="#dcdcf5" /><path d="M722 105l118 58v30l-118-58z" fill="#c9c9ec" /><path d="M840 160l50-35v30l-50 38z" fill="#9797bb" />
        <path d="M725 138l25-16 14 14-12 16-30 4z" fill="#eee" /><circle cx="795" cy="166" r="14" fill="#888" /><circle cx="718" cy="100" r="7" fill="#ddd" />
        <path d="M880 160l22-12 18 12v14l-26 8z" fill="#ddd" />
        <path d="M788 60h10v32h-10zM824 80h10v28h-10z" fill="#999" />
        <ellipse cx="797" cy="40" rx="19" ry="22" fill="#e6e6e6" /><ellipse cx="785" cy="42" rx="18" ry="21" fill="#0a858c" />
        <ellipse cx="832" cy="60" rx="19" ry="22" fill="#e6e6e6" /><ellipse cx="822" cy="62" rx="18" ry="21" fill="#0a858c" />
        <circle cx="795" cy="120" r="6" fill="#666" /><circle cx="848" cy="118" r="8" fill="#555" />
      </g>

      {/* hoist, gearbox and drip tray */}
      <g transform="translate(320 200) scale(.33333)" stroke={line} strokeWidth="2.500" strokeLinejoin="round">
        <path d="M410 162l87-46v150h-10v700l-77-40z" fill="#787873" /><path d="M410 162l87-46v30l-87 36z" fill="#a7a8a2" />
        <ellipse cx="446" cy="288" rx="13" ry="17" fill="#ddd" />
        <path d="M497 240l60 10v40l-60-28z" fill="#9ea0c8" />
        <path d="M550 200h66v100h-6v265q-25 12-50 0V300h-10z" fill="url(#pipe)" /><path d="M552 298q30 12 60 0" fill="none" />
        <path d="M575 205l65-35-22 75" fill="#b3b5da" />
        <path d="M592 268l34 6v20l-32 3z" fill="#b8bade" /><circle cx="617" cy="284" r="12" fill="#d3d4ec" />
        <path d="M55 370L637 67l38 20-573 300z" fill="#e9ebfb" />
        <path d="M95 388l562-292v62L95 452z" fill="#9fa2c6" />
        <path d="M95 432l563-285 17 3L98 452z" fill="#dddff2" />
        <path d="M55 370l42 18v66l-42-19z" fill="#6f7192" />
        <path d="M195 362q15-20 40-14l30-30q30-10 45 8v28l-25 50-40 10-50-22z" fill="#7c7c79" /><circle cx="237" cy="372" r="7" fill="#333" /><circle cx="295" cy="342" r="7" fill="#333" />
        <path d="M238 405v125" stroke="#777" strokeWidth="4" />
        <path d="M165 455l125-62q42 10 42 75l-122 68z" fill="url(#red)" />
        <ellipse cx="180" cy="495" rx="38" ry="42" fill="#e5e1dc" transform="rotate(-20 180 495)" /><ellipse cx="174" cy="496" rx="31" ry="38" fill="#5a0a0c" transform="rotate(-20 174 496)" />
        <circle cx="270" cy="392" r="16" fill="#111" /><circle cx="280" cy="402" r="5" fill="#888" stroke="none" />
        <path d="M238 520v35q18 20 8 32-20 4-22-18" fill="none" stroke="#666" strokeWidth="6" /><path d="M238 525v30q14 20 7 29-16 2-18-15" fill="none" stroke="#ddd" strokeWidth="2" />
        {/* control box */}
        <path d="M360 330l45-20 130 65v200l-50 20-125-65z" fill="#6b6b66" />
        <path d="M360 330l45-22 130 65-48 22z" fill="#f0efe8" /><path d="M352 335h8v190h-8z" fill="#555" />
        <path d="M487 395l48-22v200l-48 20z" fill="#8b8b85" /><path d="M497 400l28-12v170l-28 12z" fill="#73736e" />
        <path d="M490 565l35-12v20l-35 16z" fill="#e8e8e8" />
        <circle cx="467" cy="490" r="7" fill="#999" /><circle cx="366" cy="350" r="3" /><circle cx="366" cy="405" r="3" /><circle cx="366" cy="465" r="3" />
        {[408, 438, 467, 497].map((y) => <circle key={y} cx="495" cy={y} r="6" fill="#ccc" />)}
        {/* gearbox */}
        <path d="M520 582l150-55 245 130-115 65z" fill="#dcdef0" />
        <path d="M535 515l22-8v60l-22 10zM610 500h40v48l-40 15z" fill="#9a9dc4" /><circle cx="543" cy="532" r="7" fill="#ddd" />
        <path d="M590 607l120-60 200 110-110 62z" fill="#d8d8d8" />
        <path d="M487 582l315 145v60l30 18v372L410 985v-60l77 38z" fill="url(#gear)" />
        <path d="M797 722l118-65 20 30 15 60v370l-118 55V790l-35-12z" fill="#bababa" />
        <path d="M836 866l100-50v-40M836 1130l108-55v45l-106 55z" fill="#999" /><path d="M840 1138l95-46 5 40-65 60-38-14z" fill="#fff" />
        <path d="M487 582l315 145v55l30 18v372" fill="none" stroke="#eee" strokeWidth="4" />
        <circle cx="812" cy="808" r="9" fill="#eee" />
        <path d="M410 570l77 20v373l-77-35z" fill="#686864" />
        <ellipse cx="430" cy="616" rx="15" ry="20" fill="#eee" /><ellipse cx="430" cy="690" rx="15" ry="18" fill="#eee" /><circle cx="430" cy="817" r="11" fill="#eee" /><circle cx="429" cy="857" r="9" fill="#eee" /><circle cx="429" cy="896" r="9" fill="#eee" />
        <circle cx="471" cy="638" r="5" fill="#222" /><circle cx="471" cy="932" r="5" fill="#222" />
        <path d="M422 570q10 18 18 5" fill="#eee" />
        <ellipse cx="575" cy="935" rx="52" ry="62" fill="#ddd" /><ellipse cx="566" cy="932" rx="56" ry="66" fill="#747474" transform="rotate(-12 566 932)" />
        <ellipse cx="578" cy="835" rx="50" ry="50" fill="#ccc" /><ellipse cx="565" cy="838" rx="46" ry="44" fill="#7d7d7d" />
        <path d="M530 680l180 70 30 40" fill="none" stroke="#222" />
        <path d="M535 685q60-10 75 55v50l-30 10z" fill="#c9c9c9" />
        <Wheel x={527} y={762} /><Wheel x={683} y={820} />
        {/* indicator lamp */}
        <path d="M822 740l55-25 60 20v40l-60 22-55-22z" fill="#8c8c8c" opacity="0.85" /><circle cx="905" cy="763" r="13" fill="#c9c000" /><path d="M877 705h12v32h-12z" fill="#bbb" /><circle cx="879" cy="685" r="24" fill="#2f2f33" />
        {/* plinth */}
        <path d="M410 985l425 195 150-60v30L830 1228 408 1025z" fill="#8b8b88" />
        <path d="M410 975l425 205 140-55-135 72-430-202z" fill="#dcdcda" />
        <path d="M412 1005l420 200 145-68" fill="none" stroke="#eee" strokeWidth="4" />
        <circle cx="431" cy="965" r="13" fill="#555" /><circle cx="845" cy="1182" r="12" fill="#444" /><circle cx="902" cy="1153" r="12" fill="#444" /><circle cx="957" cy="1120" r="12" fill="#444" />
        <path d="M382 1045l30-14 20 6-40 22z" fill="#444" />
        {/* drip tray */}
        <Stand x={253} y={1290} /><Stand x={582} y={1464} />
        <path d="M190 1153l255-125 375 203v22l-248 125L190 1182z" fill="#5e5e5b" />
        <path d="M205 1155l240-115 360 192-238 120z" fill="#8a8a87" /><path d="M222 1160l222-104 350 180-222 112z" fill="#bdbeb9" stroke="none" />
        <path d="M190 1153l380 203 250-125" fill="none" /><path d="M570 1356v22" />
        <ellipse cx="505" cy="1213" rx="16" ry="10" fill="#6b6b68" />
      </g>
    </MachineSvg>
  );
}

const SmallX = ({ color = '#555', size = 9 }: { color?: string; size?: number }) => (
  <svg width={size} height={size} viewBox="0 0 9 9" aria-hidden="true"><path d="M1 1l7 7M8 1L1 8" stroke={color} strokeWidth="1.100" /></svg>
);

const Pointer = styled.svg`
  position: absolute;
  left: 184px;
  top: 706px;
`;

function Designer() {
  return (
    <DesignWindow>
      <TitleBar>
        <Logo />
        <Title>ManualDesign</Title>
        <WindowControls>
          <IconButton aria-label="Minimize"><svg width="9" height="9" viewBox="0 0 9 9"><path d="M1 4.500h7" stroke="#111" /></svg></IconButton>
          <IconButton aria-label="Maximize"><svg width="9" height="9" viewBox="0 0 9 9"><rect x="1.500" y=".5" width="6" height="7" fill="none" stroke="#111" /></svg></IconButton>
          <IconButton aria-label="Close"><SmallX color="#cfcfcf" /></IconButton>
        </WindowControls>
      </TitleBar>
      <DesignBody>
        <Sidebar>
          <Palette />
          <Properties />
        </Sidebar>
        <DesignView>
          <ViewBar>
            <span>Design View - Manual Panel</span>
            <ViewTools>
              <IconButton aria-label="Settings">
                <svg width="13" height="13" viewBox="0 0 13 13" fill="none" stroke="#e8edf1">
                  <path d="M5.300 1h2.400l.4 1.700 1.500.8 1.600-.5 1.100 2-1.200 1.200v.6l1.200 1.200-1.100 2-1.600-.5-1.500.8-.4 1.700H5.300l-.4-1.700-1.500-.8-1.600.5-1.100-2 1.200-1.200v-.6L.7 5l1.100-2 1.600.5 1.500-.8z" strokeWidth="1.100" />
                  <circle cx="6.500" cy="6.500" r="2" strokeWidth="1.200" />
                </svg>
              </IconButton>
              <IconButton aria-label="Apply"><svg width="11" height="10" viewBox="0 0 11 10"><path d="M1 5l3 3.500L10 1" fill="none" stroke="#e8edf1" strokeWidth="1.200" /></svg></IconButton>
              <IconButton aria-label="Close view"><SmallX color="#fff" /></IconButton>
            </ViewTools>
          </ViewBar>
          <Canvas>
            <Machine />
            {meters.map((m) => (
              <GaugeCard key={m.n} $x={m.x} $y={m.y} $selected={m.selected}>
                <CardHead>
                  {`GEN VOLTS V${m.n}a`}
                  <IconButton aria-label={`Remove GEN VOLTS V${m.n}a`}><SmallX /></IconButton>
                </CardHead>
                <CardBody>
                  <Tag as="label" $right htmlFor={`volts-${m.n}`}>{`V${m.n}In`}</Tag>
                  <Reading id={`volts-${m.n}`} defaultValue="0.00" />
                  <Tag>V</Tag>
                </CardBody>
              </GaugeCard>
            ))}
          </Canvas>
        </DesignView>
      </DesignBody>
    </DesignWindow>
  );
}

/* ---------- main menu window ---------- */

const MenuWindow = styled.section`
  position: absolute;
  left: 50.1%;
  right: 6px;
  top: 436px;
  bottom: 0;
  display: flex;
  flex-direction: column;
  border-top: 1px solid #a9b6c8;
  border-bottom: 2px solid #071a44;
  background: #173858;
  box-shadow: 0 0 8px rgba(0, 0, 0, 0.35);
  font-family: ${segoe};
`;

const MenuTitleBar = styled(TitleBar)`
  font-family: ${ui};
`;

const Copyright = styled.span`
  margin-left: 19px;
`;

const MenuBar = styled.nav`
  display: flex;
  gap: 9px;
  flex: none;
  height: 16px;
  padding: 0 6px 2px;
  border-bottom: 1px solid #b9cbd3;
  background: #f0f0f0;
  font: 9px/11px ${ui};
`;

const MenuItem = styled.button`
  border: 0;
  background: none;
  color: #16162c;
  &:disabled { color: #a0a0a0; }
`;

const MenuBody = styled.div`
  display: grid;
  grid-template-columns: minmax(0, 1fr) 80px;
  column-gap: 12px;
  flex: 1;
  min-height: 0;
  padding: 3px 9px 6px 3px;
`;

const MenuMain = styled.div`
  display: flex;
  flex-direction: column;
  min-height: 0;
`;

const Message = styled.p`
  flex: none;
  height: 36px;
  border: 1px solid #081422;
  background: #efefef;
  color: #0d0d0d;
  font-size: 12px;
  font-weight: bold;
  line-height: 18px;
  text-align: center;
`;

const EntryLine = styled.input`
  flex: none;
  height: 20px;
  border: 1px solid #081422;
  background: #fafafa;
`;

const SequenceFrame = styled.div`
  display: flex;
  flex: 1;
  min-height: 0;
  margin: 6px 4px 2px 0;
  overflow: hidden;
  border-top: 2px solid #081a30;
  border-left: 2px solid #081a30;
`;

const SequenceTable = styled.table`
  flex: 1;
  align-self: flex-start;
  border-spacing: 0;
  table-layout: fixed;
  color: #0d0d0d;
  font-size: 10px;
  font-weight: bold;
  line-height: 14px;
  text-align: center;

  th, td { height: 15px; padding: 0 0 0 14px; border-bottom: 1px solid #848484; background: #fff; }
  th { background: linear-gradient(#68e924, #44d70b); }
  th:first-child { width: 103px; padding: 0; background: linear-gradient(#333, #333) 100px 2px / 1px 10px no-repeat, linear-gradient(#68e924, #44d70b); }
  td:first-child { padding: 0; border-right: 1px solid #9a9a9a; }
`;

const SelectedRow = styled.tr`
  td { background: #0043e2; color: #fff; border-bottom-color: #0043e2; }
`;

const GreyScroll = styled.div`
  display: flex;
  flex-direction: column;
  justify-content: space-between;
  width: 12px;
  background: #b1b1b1;
`;

const GreyArrow = styled.button`
  height: 13px;
  border: 1px outset #ccc;
  background: #c0c0c0;
  color: #777;
  font-size: 6px;
  line-height: 8px;
`;

const SidePanel = styled.aside`
  display: flex;
  flex-direction: column;
  justify-content: flex-end;
  gap: 3px;
  color: #111;
  font-weight: bold;
`;

const KeyPad = styled.div`
  display: grid;
  grid-template-columns: 1fr 1fr;
  column-gap: 4px;
  margin-bottom: 3px;
`;

const Key = styled.button`
  height: 22px;
  border: 2px outset #d8d8d8;
  border-color: #d2d2d2 #8a8a8a #7f7f7f #d2d2d2;
  background: #bdbdbd;
  font-size: 10px;
  font-weight: bold;
`;

const Readout = styled.output<{ $left?: boolean }>`
  height: 17px;
  padding: 0 4px;
  border: 1px solid #9fb0c0;
  background: #f0f0f2;
  font-size: 9px;
  line-height: 14px;
  text-align: ${(p) => (p.$left ? 'left' : 'center')};
`;

const EndButton = styled.button`
  height: 33px;
  margin-top: 2px;
  border: 0;
  background: #bdbdbd;
  font-size: 10px;
  font-weight: bold;
  line-height: 13px;
`;

const menu: [string, boolean][] = [
  ['Test', true], ['Report', true], ['Database Tests', false], ['Spreadsheet Tests', false],
  ['View', true], ['Debug', true], ['Help', true],
];

function MainMenu() {
  return (
    <MenuWindow>
      <MenuTitleBar $muted>
        <Logo />
        <Title>MAIN MENU - SOXXXX - CSD/IDG/GEN/STARTER TEST STAND</Title>
        <Copyright>Copyright 2020 © Testek Solutions</Copyright>
        <WindowControls>
          <IconButton aria-label="Close"><SmallX color="#f0f0f0" size={7} /></IconButton>
        </WindowControls>
      </MenuTitleBar>
      <MenuBar>
        {menu.map(([label, on]) => <MenuItem key={label} disabled={!on}>{label}</MenuItem>)}
      </MenuBar>
      <MenuBody>
        <MenuMain>
          <Message>Double Click the Sequence Name you wish to run...</Message>
          <EntryLine aria-label="Sequence entry" />
          <SequenceFrame>
            <SequenceTable>
              <thead><tr><th>System Seq Num</th><th>Sequence Name</th></tr></thead>
              <tbody>
                <SelectedRow><td>1</td><td>Semi-Auto/Auto Mode</td></SelectedRow>
                {Array.from({ length: 12 }, (_, i) => <tr key={i}><td /><td /></tr>)}
              </tbody>
            </SequenceTable>
            <GreyScroll>
              <GreyArrow aria-label="Scroll up">▲</GreyArrow>
              <GreyArrow aria-label="Scroll down">▼</GreyArrow>
            </GreyScroll>
          </SequenceFrame>
        </MenuMain>
        <SidePanel>
          <KeyPad>
            {['PREV', 'NEXT', 'HOLD', 'REC', 'SET', 'SETA', 'DIS', 'DISA'].map((k) => <Key key={k}>{k}</Key>)}
          </KeyPad>
          <Readout $left>Tpt:</Readout>
          <Readout>1:30:14 PM</Readout>
          <Readout>6/12/2015</Readout>
          <Readout>0/0</Readout>
          <EndButton>END<br />SEQUENCE</EndButton>
        </SidePanel>
      </MenuBody>
    </MenuWindow>
  );
}

export default function App() {
  return (
    <>
      <GlobalStyle />
      <Desktop>
        <Wallpaper />
        <TestStand />
        <Designer />
        <MainMenu />
        <Pointer width="10" height="15" viewBox="0 0 10 15" aria-hidden="true">
          <path d="M1 1v11l2.500-2.500L5.500 14l2-1-2-4H9z" fill="#fff" stroke="#333" />
        </Pointer>
      </Desktop>
    </>
  );
}
